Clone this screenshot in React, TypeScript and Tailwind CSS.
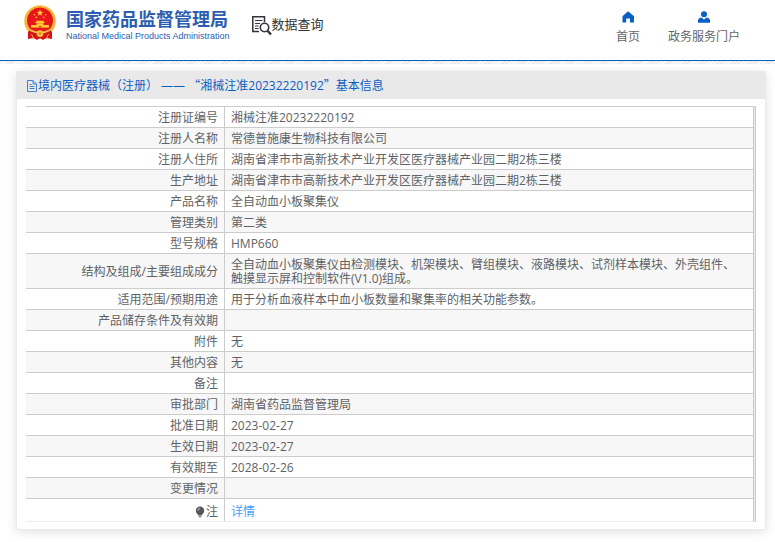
import React from "react";

const rows: { label: string; value: string }[] = [
  { label: "注册证编号", value: "湘械注准20232220192" },
  { label: "注册人名称", value: "常德普施康生物科技有限公司" },
  { label: "注册人住所", value: "湖南省津市市高新技术产业开发区医疗器械产业园二期2栋三楼" },
  { label: "生产地址", value: "湖南省津市市高新技术产业开发区医疗器械产业园二期2栋三楼" },
  { label: "产品名称", value: "全自动血小板聚集仪" },
  { label: "管理类别", value: "第二类" },
  { label: "型号规格", value: "HMP660" },
  {
    label: "结构及组成/主要组成成分",
    value:
      "全自动血小板聚集仪由检测模块、机架模块、臂组模块、液路模块、试剂样本模块、外壳组件、触摸显示屏和控制软件(V1.0)组成。",
  },
  { label: "适用范围/预期用途", value: "用于分析血液样本中血小板数量和聚集率的相关功能参数。" },
  { label: "产品储存条件及有效期", value: "" },
  { label: "附件", value: "无" },
  { label: "其他内容", value: "无" },
  { label: "备注", value: "" },
  { label: "审批部门", value: "湖南省药品监督管理局" },
  { label: "批准日期", value: "2023-02-27" },
  { label: "生效日期", value: "2023-02-27" },
  { label: "有效期至", value: "2028-02-26" },
  { label: "变更情况", value: "" },
];

function Emblem() {
  return (
    <svg viewBox="0 0 32 35" className="h-[35px] w-8 shrink-0" aria-hidden="true">
      <path d="M4 24 L28 24 L28 34 L22 33 L19 35 L16 33 L13 35 L10 33 L4 34 Z" fill="#d4131b" />
      <circle cx="16" cy="16" r="15.8" fill="#f6c044" />
      <circle cx="16" cy="16" r="14.4" fill="none" stroke="#e39a26" strokeWidth=".8" strokeDasharray="2 1.4" />
      <circle cx="16" cy="15.4" r="13" fill="#e8161a" />
      <path d="M16 4.6 l.9 2.2 2.3.1 -1.8 1.5 .6 2.3 -2-1.3 -2 1.3 .6-2.3 -1.8-1.5 2.3-.1z" fill="#ffd23a" />
      <g fill="#ffc832">
        <circle cx="10.4" cy="9.8" r=".8" />
        <circle cx="12.4" cy="12.4" r=".8" />
        <circle cx="19.6" cy="12.4" r=".8" />
        <circle cx="21.6" cy="9.8" r=".8" />
        <path d="M11 18 L12.8 15.8 H19.2 L21 18 Z" />
        <path d="M12.5 18.2 h7 v1.8 h-7z" />
        <path d="M7 20 h18 v2.6 H7z" />
      </g>
      <path d="M15.2 20.8 h1.6 v1.8 h-1.6z" fill="#e0161c" />
      <path d="M5 25.5 Q16 29 27 25.5 L28 32 Q16 35 4 32 Z" fill="#d4131b" />
      <path d="M7 24.5 Q16 29 25 24.5 L26 26 Q16 31 6 26 Z" fill="#f6c044" />
      <circle cx="16" cy="28.6" r="3.4" fill="#f6c044" />
      <circle cx="16" cy="28.6" r="1.3" fill="#d98a1c" />
      <path d="M7.5 29 L9.5 33.5 M24.5 29 L22.5 33.5" stroke="#f3b431" strokeWidth="1" />
    </svg>
  );
}

function QueryIcon() {
  return (
    <svg viewBox="0 0 20 20" className="h-5 w-5 shrink-0" fill="none" stroke="#33333d" aria-hidden="true">
      <path d="M7 15.5 H.8 V.8 H12.5 V6" strokeWidth="1.5" />
      <path d="M3 4.5 h7.5 M3 7.5 h5 M3 10 h3.5 M3 12.5 h3.5" strokeWidth="1" />
      <circle cx="12.5" cy="11.5" r="4.2" strokeWidth="1.6" />
      <path d="M15.5 14.7 L19 18.5" strokeWidth="2.4" />
    </svg>
  );
}

function HomeIcon() {
  return (
    <svg viewBox="0 0 12 12" className="h-3 w-3" fill="#0a5fc4" aria-hidden="true">
      <path d="M6 .2 L12 5.2 V11.5 H8 V7.5 H4.2 V11.5 H.5 V5.2 Z" />
    </svg>
  );
}

function UserIcon() {
  return (
    <svg viewBox="0 0 12 12" className="h-3 w-3" fill="#0a5fc4" aria-hidden="true">
      <circle cx="6" cy="3.2" r="3" />
      <path d="M0 11.8 V9.5 Q.3 7 3.5 6.6 L6 8.6 L8.5 6.6 Q11.7 7 12 9.5 V11.8 Z" />
    </svg>
  );
}

function DocumentIcon() {
  return (
    <svg viewBox="0 0 12 12" className="h-3 w-3 shrink-0" fill="none" stroke="#3f7fd0" aria-hidden="true">
      <path d="M1.5 .5 H7 L10.5 4 V11.5 H1.5 Z M7 .5 V4 H10.5" />
      <path d="M3.5 4.5 h2 M3.5 6.5 h5 M3.5 8.5 h5" />
    </svg>
  );
}

function BulbIcon() {
  return (
    <svg viewBox="0 0 10 12" className="h-3 w-[10px]" aria-hidden="true">
      <circle cx="5" cy="4.8" r="4.2" fill="#55575c" />
      <path d="M3 8 h4 v1.5 H3z M3.7 10.3 h2.6 v1 H3.7z" fill="#55575c" />
      <path d="M2.8 4.5 Q3 2.8 4.8 2.5" fill="none" stroke="#fff" strokeWidth=".8" />
    </svg>
  );
}

export default function App() {
  return (
    <div className="bg-white pb-3 font-['Open_Sans','Noto_Sans_CJK_SC',sans-serif] text-xs text-[#606266]">
      <header className="flex h-[61px] items-start justify-between border-b border-[#0560bf] pr-[35px] pl-6">
        <div className="flex">
          <a href="#" className="flex pt-[5px]">
            <Emblem />
            <span className="ml-[10px] flex flex-col pt-1 text-[#2c5db0]">
              <span className="text-lg leading-5 font-bold">国家药品监督管理局</span>
              <span className="font-['Liberation_Sans',sans-serif] text-[9px] leading-[14px]">
                National Medical Products Administration
              </span>
            </span>
          </a>
          <a href="#" className="ml-[22px] flex pt-4 text-[13px] leading-4 text-[#333]">
            <QueryIcon />
            数据查询
          </a>
        </div>
        <nav className="flex gap-7 pt-[11px] leading-4 text-[#666]">
          <a href="#" className="flex flex-col items-center gap-[6px]">
            <HomeIcon />
            首页
          </a>
          <a href="#" className="flex flex-col items-center gap-[6px]">
            <UserIcon />
            政务服务门户
          </a>
        </nav>
      </header>
      <div className="h-[3px] bg-[repeating-linear-gradient(135deg,#fff_0_1px,#e6e6e6_1px_2px)]" />
      <main className="mx-[9px] mt-[7px] ml-4 border border-[#e8eaee] bg-white shadow-[0_2px_10px_rgba(0,0,0,0.12)]">
        <h1 className="flex h-[27px] items-center bg-[#e9e9e9] pl-[9px] text-[#0a5fc4]">
          <DocumentIcon />
          <span className="whitespace-pre">
            境内医疗器械（注册） —— <span className="font-['Noto_Sans_CJK_SC',sans-serif]">“</span>
            湘械注准20232220192<span className="font-['Noto_Sans_CJK_SC',sans-serif]">”</span>基本信息
          </span>
        </h1>
        <div className="px-[9px] py-[7px]">
          <div className="border-r border-[#c8c8ce] bg-[#ebebf2] pr-px">
            <table className="w-full border-separate border-spacing-0 border-r border-b border-r-[#c8c8ce] border-b-[#ebeef0] bg-white leading-[14px]">
              <tbody>
                {rows.map((row) => (
                  <tr key={row.label} className="bg-white even:bg-[#f7f7f7]">
                    <th scope="row" className="h-[21px] w-[199px] border-t border-r border-[#ccc] pt-1 pr-[6px] pb-[2px] text-right font-normal">
                      {row.label}
                    </th>
                    <td className="border-t border-[#ccc] pt-1 pr-4 pb-[2px] pl-[6px]">{row.value}</td>
                  </tr>
                ))}
                <tr>
                  <th scope="row" className="h-[23px] border-t border-r border-[#ccc] pt-1 pr-[6px] font-normal">
                    <span className="flex items-center justify-end gap-px">
                      <BulbIcon />注
                    </span>
                  </th>
                  <td className="border-t border-[#ccc] pt-1 pl-[6px]">
                    <a href="#" className="text-[#409eff]">详情</a>
                  </td>
                </tr>
              </tbody>
            </table>
          </div>
        </div>
      </main>
    </div>
  );
}
